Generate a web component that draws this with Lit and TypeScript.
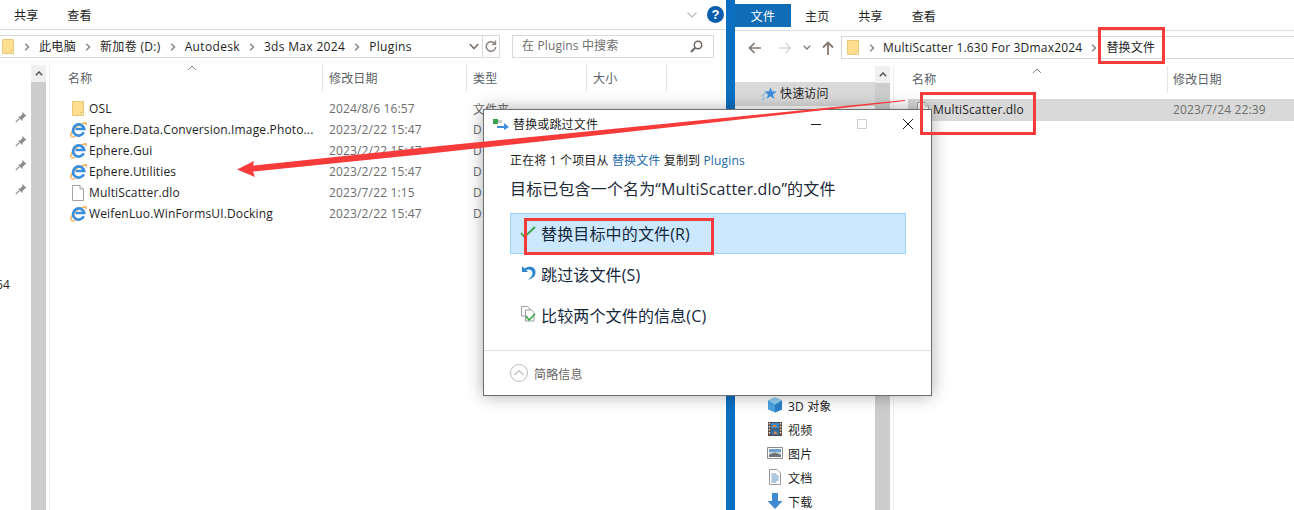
import { LitElement, html, css, svg } from "lit";
import { customElement } from "lit/decorators.js";

const folder = svg`<svg class="ic16" viewBox="0 0 16 16"><path d="M2.500 .5h11v14h-11z" fill="#ffdf8f" stroke="#e8c878"/><path d="M11 11.500h2.500v3H11z" fill="#fff3cf" stroke="#e8c878"/></svg>`;
const ie = svg`<svg class="ic17" viewBox="0 0 17 17"><path d="M1 15.500C-.2 12 4.500 4.500 13 2.500c2.500-1.200 3.800-.8 3 1.500" fill="none" stroke="#f0ae52" stroke-width="1.500"/><path d="M1.300 15.800c1 .5 2.500 .3 4-.5" fill="none" stroke="#f0ae52" stroke-width="1.200"/><path d="M13.800 11.300A5.600 5.600 0 1 1 14.200 8H5.500" fill="none" stroke="#3b8ede" stroke-width="2.700"/></svg>`;
const fileIc = svg`<svg class="ic16" viewBox="0 0 16 16"><path d="M2.500 .5h7.500l3.500 3.500v11.500h-11z" fill="#fff" stroke="#a8a3a3"/><path d="M10 .5v3.500h3.500" fill="#f2f2f2" stroke="#a8a3a3"/></svg>`;
const pin = svg`<svg class="pin" viewBox="0 0 12 12"><path d="M7 .5l4.500 4.500-1.500 .5-2.500 2.500-.5 2-4-4 2-.5 2.500-2.500z" fill="#8d8d8d"/><path d="M4 8L.8 11.200" stroke="#8d8d8d" stroke-width="1.200"/></svg>`;
const star = svg`<svg class="ic16" viewBox="0 0 16 16"><path d="M9.500 1l1.500 4.300 4.700 .2-3.700 2.900 1.400 4.600-3.900-2.700-3.900 2.700 1.400-4.600L3.300 5.500 8 5.300z" fill="#3f8fdc"/><path d="M4 7L1 10.500M4 11L1 14.500" stroke="#8cbdea" stroke-width="1.200"/></svg>`;
const chev = svg`<svg class="crumb-sep" viewBox="0 0 6 8"><path d="M1.200 .8L4.500 4 1.200 7.200" fill="none" stroke="#8f8480" stroke-width="1.500"/></svg>`;

const leftFiles = [
  { i: folder, n: "OSL", d: "2024/8/6 16:57", t: "文件夹" },
  { i: ie, n: "Ephere.Data.Conversion.Image.Photo...", d: "2023/2/22 15:47", t: "D" },
  { i: ie, n: "Ephere.Gui", d: "2023/2/22 15:47", t: "D" },
  { i: ie, n: "Ephere.Utilities", d: "2023/2/22 15:47", t: "D" },
  { i: fileIc, n: "MultiScatter.dlo", d: "2023/7/22 1:15", t: "D" },
  { i: ie, n: "WeifenLuo.WinFormsUI.Docking", d: "2023/2/22 15:47", t: "D" },
];

const sideItems = [
  { n: "3D 对象", i: svg`<svg class="ic16" viewBox="0 0 16 16"><path d="M8 .5l7 3v9l-7 3-7-3v-9z" fill="#4aa3e0"/><path d="M8 7.500l7-4v9l-7 3z" fill="#2b7fc4"/><path d="M8 7.500L1 3.500l7-3 7 3z" fill="#8fcdf2"/></svg>` },
  { n: "视频", i: svg`<svg class="ic16" viewBox="0 0 16 16"><path d="M1 1h14v14H1z" fill="#5a4a44"/><path d="M4 2h8v5.500H4z" fill="#3a87c8"/><path d="M4 8.500h8V14H4z" fill="#2f6fa8"/><path d="M5 6l2.500-3L10 6z" fill="#d98a4a"/><path d="M6 13l2-3 3 3z" fill="#d98a4a"/><path d="M2.500 2v12M13.500 2v12" stroke="#ddd" stroke-width="1.400" stroke-dasharray="1.500 1.500"/></svg>` },
  { n: "图片", i: svg`<svg class="ic16" viewBox="0 0 16 16"><path d="M.5 2.500h15v11H.5z" fill="#fff" stroke="#8c8c8c"/><path d="M2 4h12v3H2z" fill="#6f9fd0"/><path d="M2 7h12v5H2z" fill="#c9d3da"/><path d="M2 9.500l6-2 6 2.500V12H2z" fill="#6d7278"/></svg>` },
  { n: "文档", i: svg`<svg class="ic16" viewBox="0 0 16 16"><path d="M2.500 .5h7.500l3.500 3.500v11.500h-11z" fill="#fff" stroke="#9a9a9a"/><path d="M4.500 5h5M4.500 7h7M4.500 9h7M4.500 11h7M4.500 13h5" stroke="#5b8fc0"/></svg>` },
  { n: "下载", i: svg`<svg class="ic16" viewBox="0 0 16 16"><path d="M5 0h6v8h4.500L8 16 .5 8H5z" fill="#3f8ad2"/></svg>` },
];

@customElement("app-root")
export class AppRoot extends LitElement {
  static styles = css`
    :host { display: block; width: 1294px; height: 510px; overflow: hidden; position: relative; background: #fff;
      font-family: "Open Sans", "Noto Sans CJK SC", sans-serif; font-size: 12px; color: #1e1e1e; letter-spacing: .15px; }
    .ic16 { width: 16px; height: 16px; display: block; flex: none; }
    .ic17 { width: 17px; height: 17px; display: block; flex: none; margin: 0 -1px 0 0; }
    .screen { display: flex; height: 510px; }
    .pane { overflow: hidden; height: 510px; }
    .left { width: 726px; flex: none; }
    .stripe { width: 9px; flex: none; background: #0a6fc1; }
    .right { flex: 1; min-width: 0; }

    .ribbon { display: flex; align-items: center; gap: 29px; padding-left: 14px; height: 29px; border-bottom: 1px solid #dadbdc; position: relative; }
    .r-ribbon { height: 29px; padding-left: 0; padding-top: 1px; }
    .filetab { width: 56px; height: 23px; background: #0f6cb5; color: #fff; display: flex; align-items: center; justify-content: center; margin-right: -15px; }
    .ribbon-end { margin-left: auto; display: flex; align-items: center; gap: 10px; padding-right: 2px; }
    .collapse { width: 10px; height: 6px; display: block; }
    .help { width: 17px; height: 17px; border-radius: 50%; background: #0a5cac; color: #fff; font: bold 13px/17px "Liberation Sans", sans-serif; text-align: center; }

    .addr-row { display: flex; height: 23px; margin-top: 5px; }
    .addr { width: 500px; flex: none; box-sizing: border-box; border: 1px solid #d9d9d9; border-left: none; display: flex; align-items: center; padding-left: 2px; position: relative; }
    .crumb { white-space: nowrap; line-height: 19px; height: 19px; margin-top: -1px; letter-spacing: .33px; }
    .crumb-sep { width: 6px; height: 8px; margin: 0 9px; flex: none; }
    .addr .ic16 { margin-right: -1px; margin-left: -2px; }
    .addr-tools { margin-left: auto; display: flex; align-items: center; height: 100%; }
    .addr-tools svg { display: block; }
    .ddn { width: 17px; height: 100%; display: flex; align-items: center; justify-content: center; border-right: 1px solid #d9d9d9; }
    .rf { width: 16px; display: flex; justify-content: center; }
    .search { width: 202px; flex: none; margin-left: 12px; box-sizing: border-box; border: 1px solid #d9d9d9; display: flex; align-items: center; justify-content: space-between; padding: 0 10px 0 9px; color: #6d6d6d; }
    .search span { line-height: 19px; margin-top: -2px; }

    .body { display: flex; margin-top: 7px; height: 445px; }
    .nav { width: 31px; flex: none; position: relative; display: flex; flex-direction: column; align-items: flex-end; padding-top: 46px; box-sizing: border-box; }
    .pin { width: 12px; height: 12px; display: block; margin: 0 4px 12px 0; }
    .cut { align-self: flex-start; margin: 71px 0 0 -4px; line-height: 14px; }
    .scroll { width: 15px; flex: none; background: #cdcdcd; }
    .scroll-btn { height: 17px; background: #f0f0f0; display: flex; align-items: center; justify-content: center; }
    .scroll-btn svg { width: 8px; height: 5px; display: block; }
    .sep-v { width: 1px; margin-left: 3px; background: #eeeeee; flex: none; }
    .list { flex: 1; position: relative; min-width: 0; }

    .head { display: flex; height: 27px; color: #5a5f66; position: relative; }
    .head > div { box-sizing: border-box; border-right: 1px solid #e3e6e8; padding-left: 6px; line-height: 27px; }
    .head > .c1 { padding-left: 18px; }
    .caret { position: absolute; top: 0; width: 10px; height: 6px; }
    .c1 { width: 273px; flex: none; }
    .c2 { width: 144px; flex: none; }
    .c3 { width: 120px; flex: none; }
    .c4 { width: 80px; flex: none; }
    .rows { padding-top: 6px; }
    .row { display: flex; height: 21px; align-items: center; }
    .name { display: flex; align-items: center; gap: 3px; padding-left: 20px; box-sizing: border-box; white-space: nowrap; }
    .date { padding-left: 6px; box-sizing: border-box; color: #6d6d6d; }
    .type { padding-left: 6px; box-sizing: border-box; color: #6d6d6d; }

    .r-addr-row { display: flex; height: 23px; margin-top: 5px; align-items: center; }
    .nav-btns { width: 106px; flex: none; display: flex; align-items: center; padding-left: 13px; box-sizing: border-box; }
    .nav-btns svg { display: block; }
    .r-addr { flex: 1; height: 100%; box-sizing: border-box; border: 1px solid #d9d9d9; border-right: none; display: flex; align-items: center; padding-left: 5px; }
    .r-addr .crumb { letter-spacing: .2px; }
    .r-addr .crumb-sep { margin: 0 8px 0 9px; }
    .r-addr .crumb-sep + .crumb + .crumb-sep { margin: 0 9px 0 9px; }
    .r-addr .ic16 { margin-right: -1px; margin-left: -2px; }

    .r-body { display: flex; margin-top: 7px; height: 444px; overflow: hidden; }
    .side { width: 140px; flex: none; }
    .quick { height: 24px; margin-top: 16px; background: #d9d9d9; display: flex; align-items: center; gap: 3px; padding-left: 26px; margin-bottom: 287px; }
    .quick span { margin-top: -2px; }
    .side-item { height: 24px; display: flex; align-items: center; gap: 5px; padding-left: 32px; }
    .side-item span { margin-top: 1px; }
    .r-list { flex: 1; min-width: 0; position: relative; }
    .r-head { display: flex; height: 27px; color: #5a5f66; position: relative; }
    .r-head > div { box-sizing: border-box; line-height: 27px; }
    .r-c1 { width: 274px; flex: none; padding-left: 18px; border-right: 1px solid #e3e6e8; }
    .r-c2 { padding-left: 5px; }
    .sel { height: 22px; margin: 6px 0 0 14px; background: #d9d9d9; display: flex; align-items: center; padding-bottom: 1px; box-sizing: border-box; }
    .sel-name { width: 260px; flex: none; box-sizing: border-box; padding-left: 7px; display: flex; align-items: center; gap: 2px; }
    .sel .date { padding-left: 5px; }

    .dialog { position: absolute; left: 483px; top: 109px; width: 449px; height: 287px; box-sizing: border-box; background: #fff; border: 1px solid #6e6e6e; box-shadow: 0 0 16px rgba(0,0,0,.32); display: flex; flex-direction: column; }
    .d-title { height: 28px; flex: none; display: flex; align-items: center; padding-left: 9px; gap: 4px; }
    .d-title .ti { width: 16px; height: 12px; display: block; }
    .win-btns { margin-left: auto; display: flex; align-items: center; }
    .win-btns svg { width: 46px; height: 12px; display: block; }
    .d-main { flex: 1; padding: 11px 25px 0 26px; }
    .copy { height: 18px; line-height: 18px; margin-top: 3px; }
    .copy span { color: #1c6aa8; }
    .exists { font-size: 16px; line-height: 20px; margin: 9px 0 14px; color: #1e2a38; white-space: nowrap; }
    .opt { height: 41px; box-sizing: border-box; display: flex; align-items: center; font-size: 16px; padding-left: 8px; gap: 3px; color: #14283c; white-space: nowrap; border: 1px solid transparent; }
    .opt span { margin-top: -2px; }
    .opt.on { background: #cce8ff; border-color: #99d1ff; }
    .opt svg { width: 19px; height: 18px; display: block; flex: none; margin-top: -3px; }
    .d-foot { height: 44px; flex: none; border-top: 1px solid #dfdfdf; display: flex; align-items: center; padding-left: 26px; gap: 6px; color: #666; }
    .d-foot span { margin-top: 2px; }
    .d-foot svg { width: 18px; height: 18px; display: block; }

    .mark { position: absolute; box-sizing: border-box; border: 3px solid #f73b3b; }
    .m1 { left: 1098px; top: 27px; width: 67px; height: 37px; }
    .m2 { left: 920px; top: 92px; width: 116px; height: 43px; }
    .m3 { left: 524px; top: 218px; width: 190px; height: 37px; }
    .arrow { position: absolute; left: 0; top: 0; width: 1294px; height: 510px; pointer-events: none; }
  `;

  render() {
    const up = svg`<svg viewBox="0 0 8 5"><path d="M.8 4.300L4 1l3.200 3.300" fill="none" stroke="#555" stroke-width="1.500"/></svg>`;
    return html`
      <div class="screen">
        <div class="pane left">
          <div class="ribbon">
            <span>共享</span><span>查看</span>
            <div class="ribbon-end">
              <svg class="collapse" viewBox="0 0 10 6"><path d="M.5 .5L5 5 9.500 .5" fill="none" stroke="#bdbdbd" stroke-width="1.300"/></svg>
              <div class="help">?</div>
            </div>
          </div>
          <div class="addr-row">
            <div class="addr">
              ${folder}${chev}
              <span class="crumb">此电脑</span>${chev}
              <span class="crumb">新加卷 (D:)</span>${chev}
              <span class="crumb">Autodesk</span>${chev}
              <span class="crumb">3ds Max 2024</span>${chev}
              <span class="crumb">Plugins</span>
              <div class="addr-tools">
                <div class="ddn"><svg width="10" height="7" viewBox="0 0 10 7"><path d="M.8 1L5 5.500 9.200 1" fill="none" stroke="#7b7069" stroke-width="1.600"/></svg></div>
                <div class="rf"><svg width="12" height="13" viewBox="0 0 12 13"><path d="M9.800 3.500A4.800 4.800 0 1 0 10.800 7" fill="none" stroke="#8b817c" stroke-width="1.500"/><path d="M10.500 .5v3.800H6.800" fill="none" stroke="#8b817c" stroke-width="1.300"/></svg></div>
              </div>
            </div>
            <div class="search">
              <span>在 Plugins 中搜索</span>
              <svg width="13" height="13" viewBox="0 0 13 13"><circle cx="8" cy="5" r="3.700" fill="none" stroke="#6e6660" stroke-width="1.500"/><path d="M5.300 7.700L1 12" stroke="#6e6660" stroke-width="2"/></svg>
            </div>
          </div>
          <div class="body">
            <div class="nav">
              ${pin}${pin}${pin}${pin}
              <div class="cut">64</div>
            </div>
            <div class="scroll"><div class="scroll-btn">${up}</div></div>
            <div class="sep-v"></div>
            <div class="list">
              <div class="head">
                <div class="c1">名称</div><div class="c2">修改日期</div><div class="c3">类型</div><div class="c4">大小</div>
                <svg class="caret" style="left:137px" viewBox="0 0 10 6"><path d="M1 5l4-4 4 4" fill="none" stroke="#8a8a8a"/></svg>
              </div>
              <div class="rows">
                ${leftFiles.map((f) => html`<div class="row">
                  <div class="name c1">${f.i}<span>${f.n}</span></div>
                  <div class="date c2">${f.d}</div>
                  <div class="type c3">${f.t}</div>
                </div>`)}
              </div>
            </div>
          </div>
        </div>
        <div class="stripe"></div>
        <div class="pane right">
          <div class="ribbon r-ribbon">
            <div class="filetab">文件</div><span>主页</span><span>共享</span><span>查看</span>
          </div>
          <div class="r-addr-row">
            <div class="nav-btns">
              <svg width="14" height="12" viewBox="0 0 14 12"><path d="M13 6H2M6.500 1L1.500 6l5 5" fill="none" stroke="#85786f" stroke-width="1.700"/></svg>
              <svg style="margin-left:16px" width="14" height="12" viewBox="0 0 14 12"><path d="M1 6h11M7.500 1l5 5-5 5" fill="none" stroke="#d9d9d9" stroke-width="1.700"/></svg>
              <svg style="margin-left:11px" width="8" height="5" viewBox="0 0 8 5"><path d="M.8 .8L4 4l3.200-3.200" fill="none" stroke="#85786f" stroke-width="1.300"/></svg>
              <svg style="margin-left:11px" width="12" height="14" viewBox="0 0 12 14"><path d="M6 14V2M1 6.500l5-5 5 5" fill="none" stroke="#85786f" stroke-width="1.800"/></svg>
            </div>
            <div class="r-addr">
              ${folder}${chev}
              <span class="crumb">MultiScatter 1.630 For 3Dmax2024</span>${chev}
              <span class="crumb">替换文件</span>
            </div>
          </div>
          <div class="r-body">
            <div class="side">
              <div class="quick">${star}<span>快速访问</span></div>
              ${sideItems.map((s) => html`<div class="side-item">${s.i}<span>${s.n}</span></div>`)}
            </div>
            <div class="scroll"><div class="scroll-btn">${up}</div></div>
            <div class="sep-v"></div>
            <div class="r-list">
              <div class="r-head">
                <div class="r-c1">名称</div><div class="r-c2">修改日期</div>
                <svg class="caret" style="left:138px;top:2px" viewBox="0 0 10 6"><path d="M1 5l4-4 4 4" fill="none" stroke="#8a8a8a"/></svg>
              </div>
              <div class="sel">
                <div class="sel-name">${fileIc}<span>MultiScatter.dlo</span></div>
                <span class="date">2023/7/24 22:39</span>
              </div>
            </div>
          </div>
        </div>
      </div>

      <div class="dialog">
        <div class="d-title">
          <svg class="ti" viewBox="0 0 16 12"><path d="M0 1h5v5H0z" fill="#36a64a"/><path d="M5 2h4v3H5z" fill="#c9c9c9"/><path d="M4 8h7V5l5 4-5 3v-2H4z" fill="#3d8fdc"/></svg>
          <span>替换或跳过文件</span>
          <div class="win-btns">
            <svg viewBox="0 0 46 12"><path d="M18 6.500h10" stroke="#222"/></svg>
            <svg viewBox="0 0 46 12"><path d="M18.500 1.500h9v9h-9z" fill="none" stroke="#cfcfcf"/></svg>
            <svg viewBox="0 0 46 12"><path d="M18 1l10 10M28 1L18 11" stroke="#222"/></svg>
          </div>
        </div>
        <div class="d-main">
          <div class="copy">正在将 1 个项目从 <span>替换文件</span> 复制到 <span>Plugins</span></div>
          <div class="exists">目标已包含一个名为“MultiScatter.dlo”的文件</div>
          <div class="opt on">
            <svg viewBox="0 0 19 18"><path d="M2 10l3.500 4L16 4" fill="none" stroke="#3aa648" stroke-width="1.800"/></svg>
            <span>替换目标中的文件(R)</span>
          </div>
          <div class="opt">
            <svg viewBox="0 0 19 18"><path d="M3 2v6h6L7 6c3-1.500 6 0 6.500 2.500.4 2.500-1.500 5-4.500 7 5-.5 8-4 7.500-8C16 3 10.500 1 5.500 4.500z" fill="#2f86d0"/></svg>
            <span>跳过该文件(S)</span>
          </div>
          <div class="opt">
            <svg viewBox="0 0 19 18"><path d="M2.500 1.500h6l2.500 2.500v7h-8.500z" fill="#fff" stroke="#9d9d9d"/><path d="M6.500 5h6l2.500 2.500v8.500H6.500z" fill="#fff" stroke="#9d9d9d"/><path d="M7 11l3 4 6-6" fill="none" stroke="#39a648" stroke-width="1.600"/></svg>
            <span>比较两个文件的信息(C)</span>
          </div>
        </div>
        <div class="d-foot">
          <svg viewBox="0 0 18 18"><circle cx="9" cy="9" r="8.500" fill="none" stroke="#bdbdbd"/><path d="M4.500 11L9 6.500l4.500 4.500" fill="none" stroke="#bdbdbd" stroke-width="1.200"/></svg>
          <span>简略信息</span>
        </div>
      </div>

      <div class="mark m1"></div>
      <div class="mark m2"></div>
      <div class="mark m3"></div>
      <svg class="arrow" viewBox="0 0 1294 510"><polygon points="237,169.500 254,161 253,165.500 430,147 905,100 905,101 700,124 430,153.500 253,171.500 255,177" fill="#f73b3b"/></svg>
    `;
  }
}
